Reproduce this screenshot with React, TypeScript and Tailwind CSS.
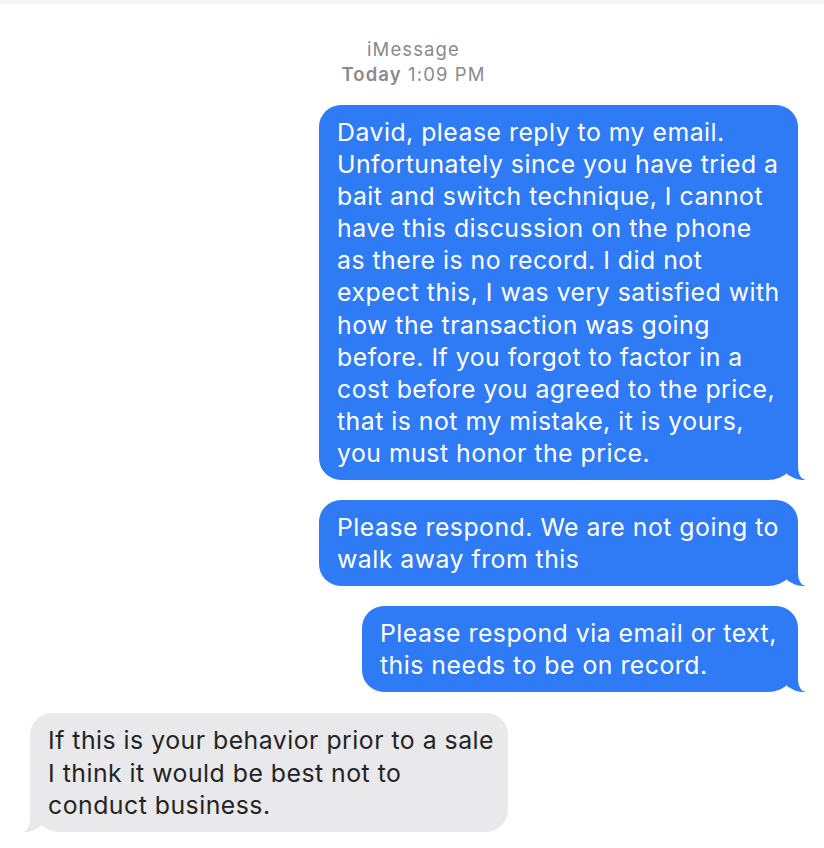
import React from "react";

const BLUE = "#2F7BF5";
const GRAY = "#E9E9EB";

function TailRight() {
  return (
    <svg
      className="absolute right-[-9px] bottom-0"
      width="22"
      height="30"
      viewBox="0 0 22 30"
    >
      <path d="M2 0 L13 0 L13 15 Q13 30 22 30 C17 30 11 30.5 2 24 Z" fill={BLUE} />
    </svg>
  );
}

function TailLeft() {
  return (
    <svg
      className="absolute left-[-9px] bottom-0"
      width="22"
      height="30"
      viewBox="0 0 22 30"
    >
      <path d="M20 0 L9 0 L9 15 Q9 30 0 30 C5 30 11 30.5 20 24 Z" fill={GRAY} />
    </svg>
  );
}

function Sent({ lines, width }: { lines: string[]; width: string }) {
  return (
    <div className="flex justify-end pr-[26px]">
      <div
        className={`relative rounded-[22px] rounded-br-[30px] bg-[#2F7BF5] px-[18px] py-[11px] text-white text-[24.8px] tracking-[0.02em] leading-[32.1px] whitespace-nowrap ${width}`}
      >
        {lines.map((l, i) => (
          <div key={i} className="relative z-10">{l}</div>
        ))}
        <TailRight />
      </div>
    </div>
  );
}

export default function App() {
  return (
    <div
      className="min-h-[848px] w-full bg-white"
      style={{ fontFamily: "Inter, 'Noto Sans', sans-serif" }}
    >
      <div className="h-[4px] bg-[#F5F4F2]" />
      <div className="flex flex-col items-center pt-[33px] text-[#8A8A8E] text-[18.5px] tracking-[0.06em] leading-[25px] pl-[3px]">
        <div>iMessage</div>
        <div>
          <span className="font-semibold">Today</span> 1:09 PM
        </div>
      </div>
      <div className="mt-[18px] flex flex-col gap-[20px]">
        <Sent
          width="w-[479px]"
          lines={[
            "David, please reply to my email.",
            "Unfortunately since you have tried a",
            "bait and switch technique, I cannot",
            "have this discussion on the phone",
            "as there is no record. I did not",
            "expect this, I was very satisfied with",
            "how the transaction was going",
            "before. If you forgot to factor in a",
            "cost before you agreed to the price,",
            "that is not my mistake, it is yours,",
            "you must honor the price.",
          ]}
        />
        <Sent
          width="w-[479px]"
          lines={["Please respond. We are not going to", "walk away from this"]}
        />
        <Sent
          width="w-[436px]"
          lines={["Please respond via email or text,", "this needs to be on record."]}
        />
        <div className="flex justify-start pl-[30px] mt-[1px]">
          <div className="relative w-[478px] rounded-[22px] rounded-bl-[30px] bg-[#E9E9EB] px-[18px] py-[11px] text-[#242424] text-[24.8px] tracking-[0.02em] leading-[32.1px] whitespace-nowrap">
            <div className="relative z-10">If this is your behavior prior to a sale</div>
            <div className="relative z-10">I think it would be best not to</div>
            <div className="relative z-10">conduct business.</div>
            <TailLeft />
          </div>
        </div>
      </div>
    </div>
  );
}
